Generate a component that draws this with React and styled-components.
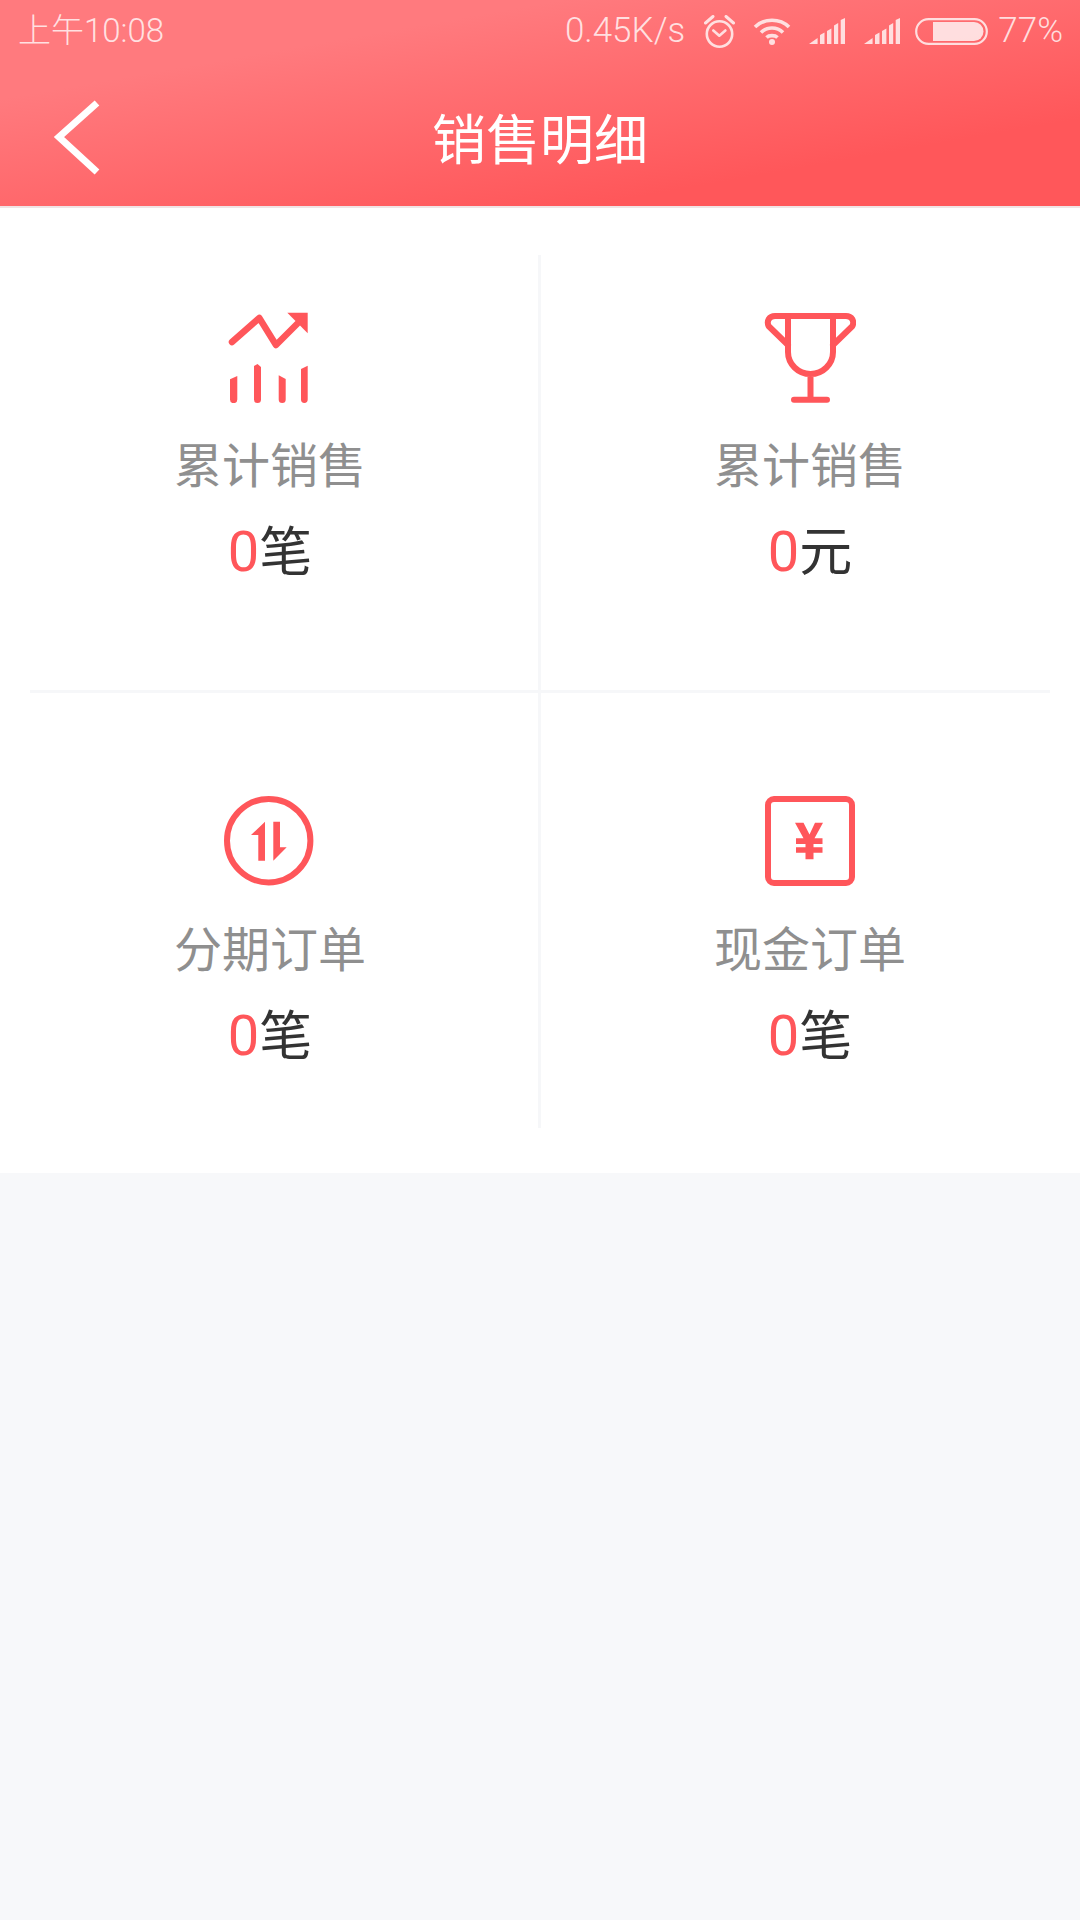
import React from "react";
import styled, { createGlobalStyle } from "styled-components";

const RED = "#ff565a";
const CJK = `"Noto Sans CJK SC", "Noto Sans", sans-serif`;
const STATUS = "rgba(255, 255, 255, 0.78)";
const LINE = "#f6f7f9";

const Global = createGlobalStyle`
  html, body { margin: 0; padding: 0; background: #f7f8fa; }
  body { font-family: Roboto, ${CJK}; }
`;

const Page = styled.div`
  width: 1080px;
  height: 1920px;
  display: flex;
  flex-direction: column;
  background: #f7f8fa;
  overflow: hidden;
`;

const Header = styled.header`
  box-sizing: border-box;
  height: 208px;
  display: flex;
  flex-direction: column;
  flex-shrink: 0;
  background: linear-gradient(170deg, #ff7a7e 25%, #ff575a 78%);
  border-bottom: 2px solid #f0e4e5;
`;

const StatusBar = styled.div`
  height: 62px;
  flex-shrink: 0;
  display: flex;
  align-items: center;
  justify-content: space-between;
  padding: 0 17px 0 18px;
  color: ${STATUS};
  font: 300 33px/62px Roboto, ${CJK};
`;

const StatusRight = styled.div`
  display: flex;
  align-items: center;
  font-size: 35px;
`;

const StatusIcon = styled.svg`
  display: block;
  flex-shrink: 0;
  margin-left: ${(p) => p.$gap}px;
  fill: none;
  stroke: ${STATUS};
`;

const Percent = styled.span`
  margin-left: 10px;
`;

const NavBar = styled.div`
  flex: 1;
  position: relative;
  display: flex;
  align-items: center;
  justify-content: center;
  padding-top: 6px;
`;

const BackIcon = styled.svg`
  position: absolute;
  left: 50px;
  top: 32px;
`;

const Title = styled.h1`
  margin: 0;
  color: #fff;
  font: 400 54px/1 ${CJK};
`;

const Panel = styled.section`
  background: #fff;
  padding: 47px 30px 45px;
  display: grid;
  grid-template-columns: 508px 512px;
  grid-template-rows: 435px 438px;
`;

const Cell = styled.div`
  display: flex;
  flex-direction: column;
  align-items: center;
  box-sizing: border-box;
  padding-top: ${(p) => (p.$row === 0 ? 56 : 102)}px;
  padding-left: ${(p) => (p.$col === 1 ? 29 : 0)}px;
  padding-right: ${(p) => (p.$col === 0 ? 28 : 0)}px;
  border-top: ${(p) => (p.$row === 1 ? `3px solid ${LINE}` : "none")};
  border-left: ${(p) => (p.$col === 1 ? `3px solid ${LINE}` : "none")};
`;

const IconWrap = styled.svg`
  display: block;
  width: 92px;
  height: 92px;
  flex-shrink: 0;
  fill: none;
  stroke: ${RED};
`;

const Label = styled.div`
  margin-top: 26px;
  color: #8f8f8f;
  font: 400 48px/66px ${CJK};
`;

const Value = styled.div`
  margin-top: 20px;
  color: #333;
  font: 400 53px/66px ${CJK};
`;

const Num = styled.span`
  color: ${RED};
  font-family: Roboto, sans-serif;
  font-size: 56px;
`;

const TrendIcon = () => (
  <IconWrap viewBox="0 0 92 92">
    <path d="M8 31 35.300 7 52 34 73 13" strokeWidth="6.500" strokeLinecap="round" strokeLinejoin="round" />
    <path d="M63.300 1.700H83.700V22.300Z" fill={RED} stroke="none" />
    <path
      d="M6 68.300 13.300 65V88.500A3.500 3.500 0 0 1 6 88.500ZM30 55 33.500 53 37 56V88.500A3.500 3.500 0 0 1 30 88.500ZM54.700 64.300 61.700 68V88.500A3.500 3.500 0 0 1 54.700 88.500ZM77 58 83.700 54.700V88.500A3.350 3.500 0 0 1 77 88.500Z"
      fill={RED}
      stroke="none"
    />
  </IconWrap>
);

const TrophyIcon = () => (
  <IconWrap viewBox="0 0 92 92">
    <path d="M24 34 4.500 15C2.500 10 5 5 11 5H82C88 5 90.500 10 88.500 15L69 34" strokeWidth="6" strokeLinejoin="round" strokeLinecap="round" />
    <path d="M24 5V41C24 53 34 63 46.500 63S69 53 69 41V5M46.500 63V88.800M30 88.800H63" strokeWidth="6" strokeLinecap="round" />
  </IconWrap>
);

const SwapIcon = () => (
  <IconWrap viewBox="0 0 92 92">
    <circle cx="44.700" cy="45.700" r="41.700" strokeWidth="6" />
    <path d="M41 26.700V65.700H34.300V40H27Z M49.300 26.700H56V52.300H62.700L49.300 65.700Z" fill={RED} stroke="none" />
  </IconWrap>
);

const YenIcon = () => (
  <IconWrap viewBox="0 0 92 92">
    <rect x="4" y="4" width="84" height="84" rx="6" strokeWidth="6" />
    <path
      d="M31 27.700H39.500L45.500 39.500 51 27.700H59L50.500 43.300H58.500V49H49.500V52.300H58.500V57.700H49.500V64.300H41.500V57.700H32V52.300H41.500V49H32V43.300H39.500Z"
      fill={RED}
      stroke="none"
    />
  </IconWrap>
);

const stats = [
  { Icon: TrendIcon, label: "累计销售", unit: "笔" },
  { Icon: TrophyIcon, label: "累计销售", unit: "元" },
  { Icon: SwapIcon, label: "分期订单", unit: "笔" },
  { Icon: YenIcon, label: "现金订单", unit: "笔" },
];

const Signal = ({ gap }) => (
  <StatusIcon $gap={gap} width="36" height="26" viewBox="0 0 36 26">
    <path
      d="M0 26 8.600 20V26ZM11 17 15.500 14.600V26H11ZM18 13 22.400 10.500V26H18ZM25 7.500 29.200 5V26H25ZM31.700 2 36 0V26H31.700Z"
      fill={STATUS}
      stroke="none"
    />
  </StatusIcon>
);

export default function App() {
  return (
    <Page>
      <Global />
      <Header>
        <StatusBar>
          <span>上午10:08</span>
          <StatusRight>
            <span>0.45K/s</span>
            <StatusIcon $gap={19} width="31" height="33" viewBox="0 0 31 33" strokeWidth="2.600">
              <circle cx="15.500" cy="19" r="12.700" />
              <path d="M9.300 15.500 15.300 20.700 21.400 15.500" strokeLinecap="round" strokeLinejoin="round" />
              <path d="M1.500 8 9 1.500M22 1.500 29.500 8" strokeWidth="3" strokeLinecap="round" />
            </StatusIcon>
            <StatusIcon $gap={18} width="38" height="28" viewBox="0 0 38 28" strokeWidth="3.600">
              <path d="M2 10C11 1 27 1 36 10M8 15.500C14 9.500 24 9.500 30 15.500M13.500 20.500C16 18 22 18 24.500 20.500" />
              <circle cx="19" cy="25" r="3" fill={STATUS} stroke="none" />
            </StatusIcon>
            <Signal gap={18} />
            <Signal gap={19} />
            <StatusIcon $gap={15} width="73" height="27" viewBox="0 0 73 27" strokeWidth="2.200">
              <rect x="1.200" y="1.200" width="70.600" height="24.600" rx="12.300" />
              <path d="M18 4H59A9.500 9.500 0 0 1 59 23H18Z" fill={STATUS} stroke="none" />
            </StatusIcon>
            <Percent>77%</Percent>
          </StatusRight>
        </StatusBar>
        <NavBar>
          <BackIcon width="54" height="84" viewBox="0 0 54 84" fill="none" stroke="#fff" strokeWidth="7">
            <path d="M47 9 9 43 47 78" />
          </BackIcon>
          <Title>销售明细</Title>
        </NavBar>
      </Header>
      <Panel>
        {stats.map(({ Icon, label, unit }, i) => (
          <Cell key={i} $row={Math.floor(i / 2)} $col={i % 2}>
            <Icon />
            <Label>{label}</Label>
            <Value>
              <Num>0</Num>
              {unit}
            </Value>
          </Cell>
        ))}
      </Panel>
    </Page>
  );
}
